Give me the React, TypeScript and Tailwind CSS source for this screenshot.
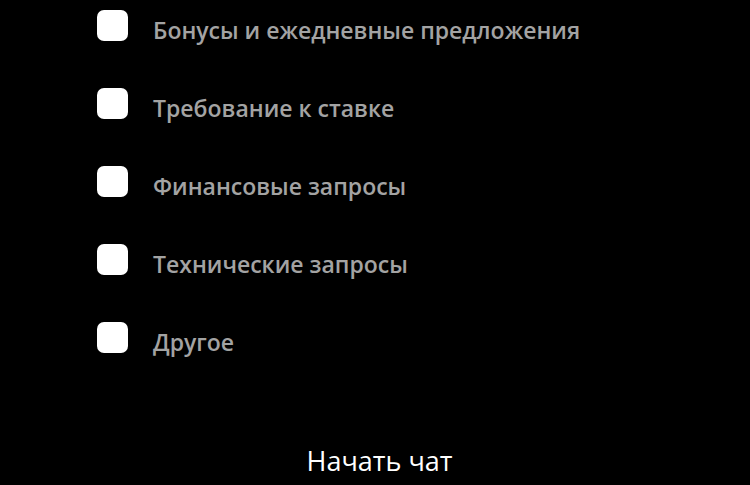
import React from 'react';

const topics = [
  'Бонусы и ежедневные предложения',
  'Требование к ставке',
  'Финансовые запросы',
  'Технические запросы',
  'Другое',
];

export default function App() {
  return (
    <div className="w-[750px] h-[485px] bg-black overflow-hidden flex flex-col" style={{ fontFamily: '"Open Sans", "Noto Sans", sans-serif' }}>
      <div className="flex flex-col pl-[97px] pt-[10px]">
        {topics.map((t) => (
          <label key={t} className="flex items-center h-[31px] mb-[47px] cursor-pointer">
            <span className="w-[31px] h-[31px] rounded-[7px] bg-white shrink-0" />
            <span className="ml-[25px] mt-[9px] text-[23px] font-semibold text-[#a3a3a3] leading-none">{t}</span>
          </label>
        ))}
      </div>
      <div className="flex justify-center mt-[47px] pl-[9px]">
        <button className="text-white text-[27px] leading-none">Начать чат</button>
      </div>
    </div>
  );
}
